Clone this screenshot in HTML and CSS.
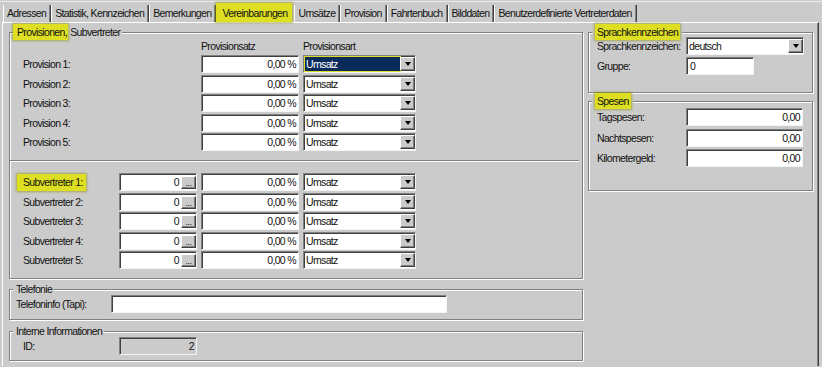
FILE: index.html
```html
<!DOCTYPE html>
<html lang="de">
<head>
    <meta charset="UTF-8">
    <title>Vereinbarungen</title>
    <link rel="stylesheet" href="styles.css">
</head>
<body>
<div class="window">
    <div class="tabs">
        <div class="tab">Adressen</div>
        <div class="tab">Statistik, Kennzeichen</div>
        <div class="tab">Bemerkungen</div>
        <div class="tab active">Vereinbarungen</div>
        <div class="tab">Umsätze</div>
        <div class="tab">Provision</div>
        <div class="tab">Fahrtenbuch</div>
        <div class="tab">Bilddaten</div>
        <div class="tab">Benutzerdefinierte Vertreterdaten</div>
    </div>

    <div class="panel">
        <div class="col-left">
            <fieldset class="group prov">
                <legend><span class="mark first">Provisionen,</span> Subvertreter</legend>
                <div class="rows top">
                    <div class="row head">
                        <span class="label wide"></span>
                        <span class="hcol">Provisionsatz</span>
                        <span>Provisionsart</span>
                    </div>
                    <div class="row">
                        <span class="label wide">Provision 1:</span>
                        <div class="field pct right">0,00 %</div>
                        <div class="field sel"><span class="value focus">Umsatz</span><span class="drop"></span></div>
                    </div>
                    <div class="row">
                        <span class="label wide">Provision 2:</span>
                        <div class="field pct right">0,00 %</div>
                        <div class="field sel"><span class="value">Umsatz</span><span class="drop"></span></div>
                    </div>
                    <div class="row">
                        <span class="label wide">Provision 3:</span>
                        <div class="field pct right">0,00 %</div>
                        <div class="field sel"><span class="value">Umsatz</span><span class="drop"></span></div>
                    </div>
                    <div class="row">
                        <span class="label wide">Provision 4:</span>
                        <div class="field pct right">0,00 %</div>
                        <div class="field sel"><span class="value">Umsatz</span><span class="drop"></span></div>
                    </div>
                    <div class="row">
                        <span class="label wide">Provision 5:</span>
                        <div class="field pct right">0,00 %</div>
                        <div class="field sel"><span class="value">Umsatz</span><span class="drop"></span></div>
                    </div>
                </div>

                <div class="sep"></div>

                <div class="rows">
                    <div class="row">
                        <span class="label"><span class="mark tag">Subvertreter 1:</span></span>
                        <div class="field num"><span class="val">0</span><span class="dots">...</span></div>
                        <div class="field pct right">0,00 %</div>
                        <div class="field sel"><span class="value">Umsatz</span><span class="drop"></span></div>
                    </div>
                    <div class="row">
                        <span class="label">Subvertreter 2:</span>
                        <div class="field num"><span class="val">0</span><span class="dots">...</span></div>
                        <div class="field pct right">0,00 %</div>
                        <div class="field sel"><span class="value">Umsatz</span><span class="drop"></span></div>
                    </div>
                    <div class="row">
                        <span class="label">Subvertreter 3:</span>
                        <div class="field num"><span class="val">0</span><span class="dots">...</span></div>
                        <div class="field pct right">0,00 %</div>
                        <div class="field sel"><span class="value">Umsatz</span><span class="drop"></span></div>
                    </div>
                    <div class="row">
                        <span class="label">Subvertreter 4:</span>
                        <div class="field num"><span class="val">0</span><span class="dots">...</span></div>
                        <div class="field pct right">0,00 %</div>
                        <div class="field sel"><span class="value">Umsatz</span><span class="drop"></span></div>
                    </div>
                    <div class="row">
                        <span class="label">Subvertreter 5:</span>
                        <div class="field num"><span class="val">0</span><span class="dots">...</span></div>
                        <div class="field pct right">0,00 %</div>
                        <div class="field sel"><span class="value">Umsatz</span><span class="drop"></span></div>
                    </div>
                </div>
            </fieldset>

            <fieldset class="group tel">
                <legend>Telefonie</legend>
                <div class="rows">
                    <div class="row">
                        <span class="label tapi">Telefoninfo (Tapi):</span>
                        <div class="field tapi-field"></div>
                    </div>
                </div>
            </fieldset>

            <fieldset class="group intern">
                <legend>Interne Informationen</legend>
                <div class="rows">
                    <div class="row">
                        <span class="label">ID:</span>
                        <div class="field id right">2</div>
                    </div>
                </div>
            </fieldset>
        </div>

        <div class="col-right">
            <fieldset class="group lang">
                <legend><span class="mark">Sprachkennzeichen</span></legend>
                <div class="rows">
                    <div class="row">
                        <span class="label">Sprachkennzeichen:</span>
                        <div class="field sel lang-sel"><span class="value">deutsch</span><span class="drop"></span></div>
                    </div>
                    <div class="row">
                        <span class="label">Gruppe:</span>
                        <div class="field group-no">0</div>
                    </div>
                </div>
            </fieldset>

            <fieldset class="group spesen">
                <legend><span class="mark">Spesen</span></legend>
                <div class="rows">
                    <div class="row">
                        <span class="label">Tagspesen:</span>
                        <div class="field money right">0,00</div>
                    </div>
                    <div class="row">
                        <span class="label">Nachtspesen:</span>
                        <div class="field money right">0,00</div>
                    </div>
                    <div class="row">
                        <span class="label">Kilometergeld:</span>
                        <div class="field money right">0,00</div>
                    </div>
                </div>
            </fieldset>
        </div>
    </div>
</div>
</body>
</html>
```

FILE: styles.css
```css
body {
    margin: 0;
    padding-top: 1px;
    background-color: #cbcbcb;
    font-family: "Liberation Sans", Arial, sans-serif;
    font-size: 10.5px;
    letter-spacing: -0.65px;
    color: #111;
    overflow: hidden;
}
.window {
    border-top: 1px solid #ececec;
}

/* tab strip */
.tabs {
    display: flex;
    align-items: flex-end;
    height: 20px;
    padding-left: 3px;
}
.tab {
    height: 17px;
    line-height: 17px;
    padding: 0 4px 0 3px;
    border-left: 1px solid #fff;
    border-right: 1px solid #404040;
    box-shadow: inset -1px 0 #808080;
    white-space: nowrap;
}
.tab.active {
    height: 17px;
    padding: 2px 5px 0 6px;
    border-left: none;
    border-right: none;
    margin-right: 2px;
    background-color: #dede22;
    box-shadow: 0 0 2px 1px rgba(140, 140, 20, 0.6);
}

/* page body */
.panel {
    display: flex;
    gap: 5px;
    height: 339px;
    margin: 0 3px 0 2px;
    padding: 4px 5px 0 6px;
    border-top: 1px solid #fff;
    border-left: 1px solid #fff;
    border-right: 1px solid #404040;
    box-shadow: inset -1px 0 #808080;
}
.col-left {
    width: 574px;
}
.col-right {
    width: 225px;
}

/* group boxes */
.group {
    margin: 0;
    padding: 0;
    min-width: 0;
    border: 1px solid #808080;
    box-shadow: inset 1px 1px 0 #fff, 1px 1px 0 #fff;
}
.group legend {
    margin-left: 3px;
    padding: 0 2px 0 3px;
    line-height: 11px;
    background-color: #cbcbcb;
}
.mark {
    padding: 2px 2px;
    background-color: #dede22;
    box-shadow: 0 0 2px 1px rgba(140, 140, 20, 0.6);
}
.mark.first {
    margin-left: -3px;
    padding: 2px 1px 2px 4px;
}
.mark.tag {
    display: inline-block;
    margin-left: -6px;
    padding: 0 3px 0 6px;
    line-height: 17px;
}

.prov {
    padding-bottom: 9px;
}
.tel {
    margin-top: 5px;
    padding-bottom: 6px;
}
.intern {
    margin-top: 6px;
    padding-bottom: 5px;
}
.lang {
    padding-bottom: 17px;
}
.spesen {
    margin-top: 3px;
    padding-bottom: 23px;
}

.rows {
    display: flex;
    flex-direction: column;
    gap: 1.5px;
    padding-left: 13px;
}
.rows.top {
    padding-top: 1px;
}
.tel .rows {
    padding-left: 6px;
}
.lang .rows {
    gap: 2px;
    padding-left: 8px;
    margin-top: -1px;
}
.spesen .rows {
    gap: 2.5px;
    padding-left: 8px;
    margin-top: 1px;
}

.row {
    display: flex;
    align-items: center;
    height: 18px;
}
.row.head {
    height: 13px;
    margin-bottom: 1.5px;
}
.label {
    flex: none;
    width: 96px;
    white-space: nowrap;
}
.label.wide {
    width: 178px;
}
.label.tapi {
    width: 95px;
}
.col-right .label {
    width: 89px;
}
.hcol {
    width: 102px;
}

.sep {
    margin: 9px 3px 11px 0;
    border-top: 1px solid #808080;
    border-bottom: 1px solid #fff;
}

/* edit fields */
.field {
    flex: none;
    box-sizing: border-box;
    height: 18px;
    padding: 0 2px 0 3px;
    border: 1px solid;
    border-color: #808080 #f4f4f4 #f4f4f4 #808080;
    box-shadow: inset 1px 1px 0 #404040;
    background-color: #fff;
    line-height: 16px;
    white-space: nowrap;
}
.right {
    text-align: right;
}
.pct {
    width: 98px;
    margin-right: 4px;
}
.num {
    display: flex;
    width: 78px;
    margin-right: 4px;
    padding: 2px 0 1px 0;
}
.num .val {
    flex: 1;
    padding-right: 2px;
    text-align: right;
    line-height: 13px;
}
.dots {
    width: 15px;
    height: 13px;
    box-sizing: border-box;
    border: 1px solid;
    border-color: #fff #404040 #404040 #fff;
    box-shadow: inset -1px -1px 0 #808080;
    background-color: #cbcbcb;
    font-size: 9px;
    line-height: 12px;
    text-align: center;
    letter-spacing: -0.5px;
}
.sel {
    display: flex;
    width: 113px;
    padding: 1px 0 1px 1px;
}
.value {
    flex: 1;
    padding-left: 1px;
    line-height: 14px;
}
.value.focus {
    background-color: #0a2a5c;
    color: #fff;
    outline: 1px solid #dede22;
}
.drop {
    display: flex;
    align-items: center;
    justify-content: center;
    width: 15px;
    height: 14px;
    box-sizing: border-box;
    border: 1px solid;
    border-color: #fff #404040 #404040 #fff;
    box-shadow: inset -1px -1px 0 #808080;
    background-color: #cbcbcb;
}
.drop::after {
    content: "";
    border-left: 3px solid transparent;
    border-right: 3px solid transparent;
    border-top: 4px solid #000;
}
.tapi-field {
    width: 336px;
}
.id {
    width: 78px;
    background-color: #cbcbcb;
}
.lang-sel {
    width: 118px;
}
.group-no {
    width: 68px;
}
.money {
    width: 117px;
}
```
